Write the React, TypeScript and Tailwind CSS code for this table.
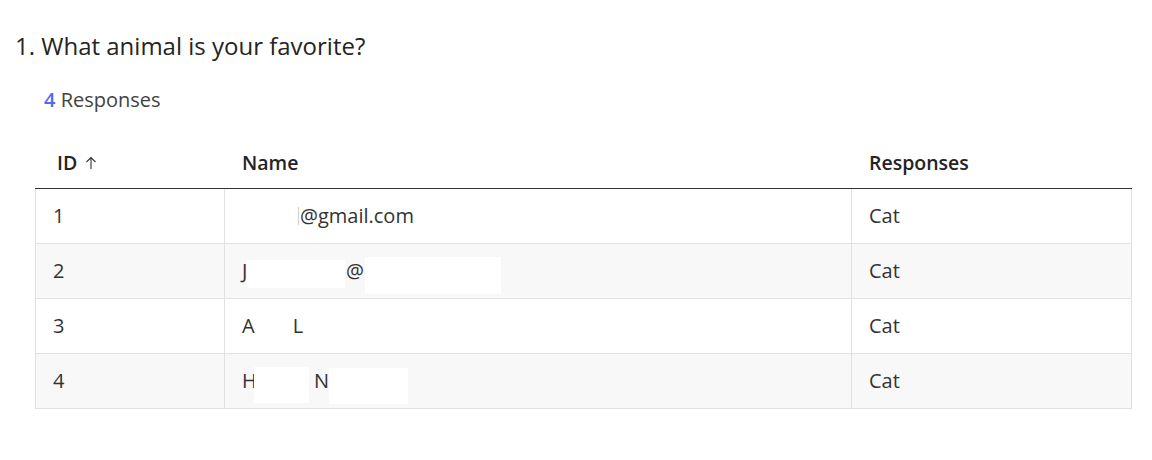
import React from "react";

const font = { fontFamily: '"Segoe UI", "Open Sans", "Noto Sans", sans-serif' };

export default function App() {
  const rows: { id: string; name: React.ReactNode; resp: string }[] = [
    {
      id: "1",
      name: (
        <span className="flex items-center">
          <span className="inline-block w-[56px]" />
          <span className="inline-block w-[1px] h-[18px] bg-[#d0d0d0] mr-[1px]" />
          <span>@gmail.com</span>
        </span>
      ),
      resp: "Cat",
    },
    {
      id: "2",
      name: (
        <span className="flex items-center">
          <span className="w-[5px]">J</span>
          <span className="inline-block w-[98px] h-[28px] bg-white mt-[6px]" />
          <span className="ml-[1px]">@</span>
          <span className="inline-block w-[136px] h-[37px] bg-white ml-[1px] mt-[9px]" />
        </span>
      ),
      resp: "Cat",
    },
    {
      id: "3",
      name: (
        <span className="flex items-center">
          <span>A</span>
          <span className="inline-block w-[38px]" />
          <span>L</span>
        </span>
      ),
      resp: "Cat",
    },
    {
      id: "4",
      name: (
        <span className="flex items-center">
          <span className="w-[12px]">H</span>
          <span className="inline-block w-[55px] h-[36px] bg-white mt-[7px]" />
          <span className="ml-[5px] w-[15px]">N</span>
          <span className="inline-block w-[79px] h-[36px] bg-white mt-[9px]" />
        </span>
      ),
      resp: "Cat",
    },
  ];

  return (
    <div className="w-[1152px] h-[460px] bg-white text-[#242424]" style={font}>
      <div className="pt-[30px] pl-[15px] text-[24px] leading-[32px]">1. What animal is your favorite?</div>
      <div className="mt-[25px] pl-[44px] text-[20px] leading-[26px] text-[#424242]">
        <span className="font-semibold text-[#4f6bed]">4</span> Responses
      </div>
      <div className="mt-[24px] ml-[35px] w-[1097px] text-[20px]">
        <div className="grid grid-cols-[190px_627px_280px] h-[52px] items-center border-b border-[#333333] font-semibold text-[19.5px] text-[#242424]">
          <div className="pl-[22px] flex items-center gap-[8px]">
            <span>ID</span>
            <svg width="12" height="14" viewBox="0 0 12 14" fill="none" stroke="#333" strokeWidth="1.1">
              <path d="M6 13V1.5M1.5 6L6 1.5L10.5 6" />
            </svg>
          </div>
          <div className="pl-[17px]">Name</div>
          <div className="pl-[17px]">Responses</div>
        </div>
        {rows.map((r, i) => (
          <div
            key={r.id}
            className={`grid grid-cols-[190px_627px_280px] h-[55px] text-[#333333] ${i % 2 === 1 ? "bg-[#f8f8f8]" : "bg-white"}`}
          >
            <div className="pl-[17px] flex items-center border-l border-b border-r border-[#e1e1e1]">{r.id}</div>
            <div className="pl-[17px] flex items-center border-b border-r border-[#e1e1e1]">{r.name}</div>
            <div className="pl-[17px] flex items-center border-b border-r border-[#e1e1e1]">{r.resp}</div>
          </div>
        ))}
      </div>
    </div>
  );
}
